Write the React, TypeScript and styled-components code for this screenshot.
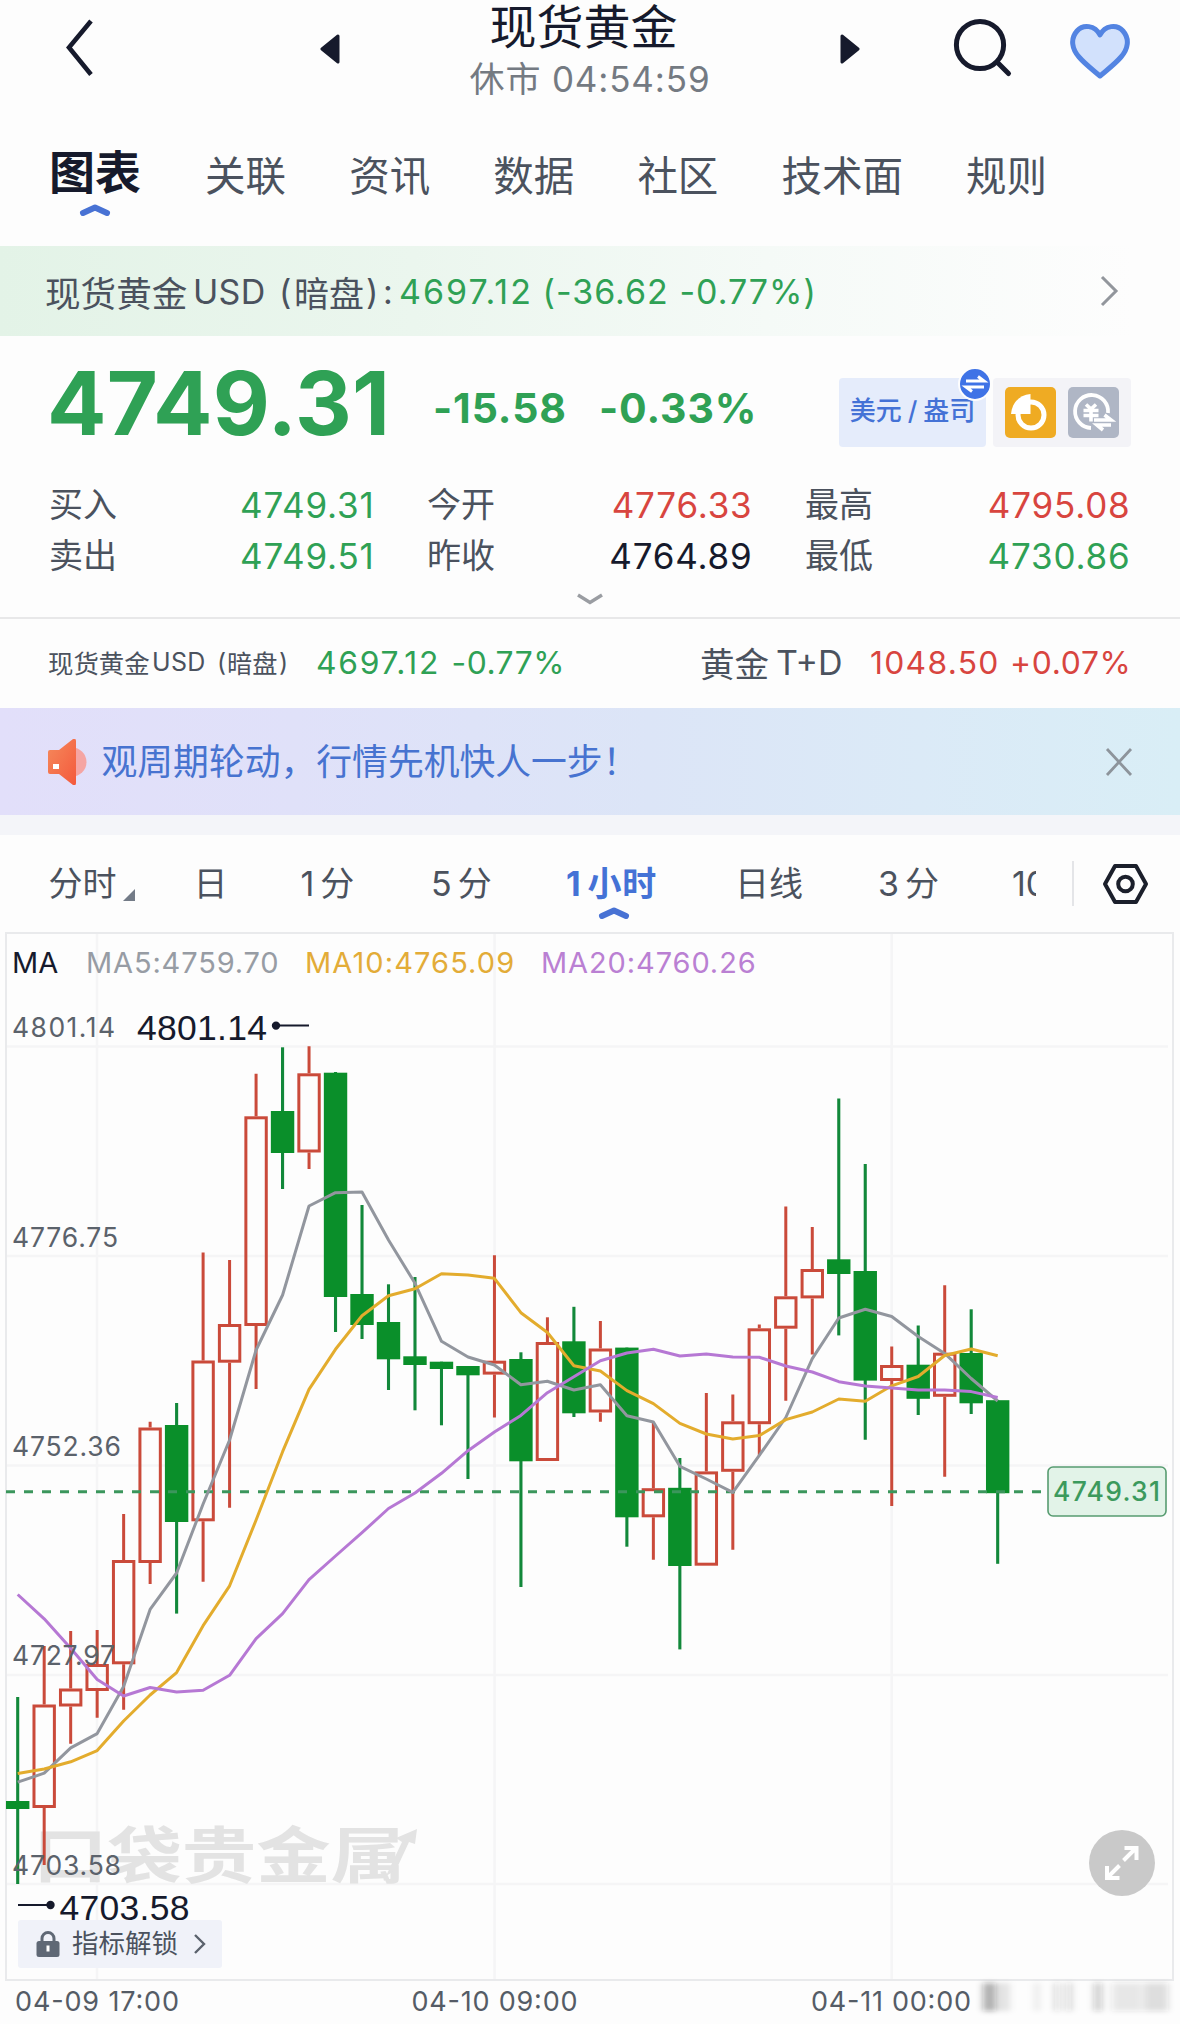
import React from "react";
import styled, { createGlobalStyle } from "styled-components";

const GREEN = "#2fa155";
const RED = "#d8453f";
const INK = "#161a2c";
const SLATE = "#4b525e";
const BLUE = "#4472d6";

const GlobalStyle = createGlobalStyle`
  body {
    margin: 0;
    background: #fdfdfd;
  }
`;

const Page = styled.main`
  width: 1180px;
  height: 2024px;
  overflow: hidden;
  display: flex;
  flex-direction: column;
  background: #fdfdfd;
  color: ${SLATE};
  font-family: Inter, "Noto Sans CJK SC", sans-serif;
  font-size: 34px;
  white-space: pre;
`;

const Header = styled.header`
  height: 118px;
  flex: none;
  display: grid;
  grid-template-columns: 310px 40px 480px 40px 144px 117px;
`;

const IconCell = styled.div<{ $align?: string; $pad?: number; $drop?: number }>`
  height: 95px;
  display: flex;
  align-items: center;
  justify-content: ${(p) => p.$align ?? "center"};
  padding-left: ${(p) => p.$pad ?? 0}px;
  padding-top: ${(p) => p.$drop ?? 0}px;
`;

const TitleBlock = styled.div`
  display: flex;
  flex-direction: column;
  align-items: center;
`;

const Title = styled.h1`
  margin: 0;
  padding-right: 13px;
  font-size: 47px;
  line-height: 54px;
  font-weight: 400;
  color: ${INK};
`;

const Subtitle = styled.div`
  font-size: 35px;
  line-height: 51px;
  letter-spacing: 0.85px;
  color: #747a82;
`;

const Tabs = styled.nav`
  height: 128px;
  flex: none;
  display: flex;
  gap: 63.1px;
  padding-left: 49px;
  box-sizing: border-box;
`;

const Tab = styled.div<{ $active?: boolean }>`
  display: flex;
  flex-direction: column;
  align-items: center;
  gap: 3px;
  padding-top: ${(p) => (p.$active ? 26 : 33)}px;
  margin-right: ${(p) => (p.$active ? 1 : 0)}px;
  font-size: ${(p) => (p.$active ? 46 : 40.5)}px;
  line-height: ${(p) => (p.$active ? 56 : 52)}px;
  font-weight: ${(p) => (p.$active ? 700 : 400)};
  color: ${(p) => (p.$active ? INK : SLATE)};
`;

const DarkBar = styled.section`
  height: 90px;
  flex: none;
  display: flex;
  align-items: center;
  padding: 0 61px 0 45px;
  box-sizing: border-box;
  background: linear-gradient(90deg, #e3f3e7 0%, #ebf6ee 35%, #f5faf7 65%, #fdfdfd 96%);
`;

const Cell = styled.span<{ $w: number; $ls?: number; $size?: number; $color?: string }>`
  width: ${(p) => p.$w}px;
  flex: none;
  letter-spacing: ${(p) => p.$ls ?? 0}px;
  font-size: ${(p) => p.$size ?? 34}px;
  color: ${(p) => p.$color ?? "inherit"};
`;

const Push = styled.span`
  margin-left: auto;
  display: flex;
`;

const PriceRow = styled.section`
  height: 143px;
  flex: none;
  display: flex;
  align-items: center;
  padding: 4px 0 0 47px;
  box-sizing: border-box;
  color: ${GREEN};
  font-weight: 700;
`;

const Price = styled.span`
  width: 386px;
  font-size: 88px;
  line-height: 100px;
  letter-spacing: 0.2px;
  padding-bottom: 14px;
`;

const Change = styled.span<{ $w: number }>`
  width: ${(p) => p.$w}px;
  font-size: 41px;
  line-height: 50px;
  letter-spacing: 0.9px;
  padding-bottom: 3px;
`;

const UnitChip = styled.div`
  position: relative;
  width: 147px;
  height: 69px;
  margin-left: auto;
  border-radius: 4px;
  background: #e5ecfb;
  color: ${BLUE};
  font-size: 26px;
  line-height: 66px;
  font-weight: 500;
  display: flex;
  justify-content: center;
  gap: 6px;
`;

const SwapBadge = styled.span`
  position: absolute;
  right: -6px;
  top: -11px;
  display: flex;
`;

const Toggle = styled.div`
  width: 138px;
  height: 69px;
  margin: 0 49px 0 7px;
  border-radius: 4px;
  background: #f3f3f7;
  display: flex;
  align-items: center;
  justify-content: center;
  gap: 12px;
`;

const PriceTools = styled.div`
  display: flex;
  margin-left: auto;
  padding-top: 6px;
`;

const Quotes = styled.section`
  height: 102px;
  flex: none;
  display: grid;
  grid-template-columns: 325px 325px 325px;
  grid-auto-rows: 51px;
  column-gap: 53px;
  padding: 0 49px;
`;

const Quote = styled.div<{ $color: string }>`
  display: flex;
  align-items: center;
  justify-content: space-between;
  font-size: 34px;
  line-height: 50px;

  b {
    font-weight: 400;
    font-size: 35px;
    letter-spacing: 0.8px;
    margin-right: -0.5px;
    color: ${(p) => p.$color};
  }
`;

const Expand = styled.div`
  height: 36px;
  flex: none;
  display: flex;
  align-items: center;
  justify-content: center;
  border-bottom: 2px solid #e8e8e9;
`;

const Related = styled.section`
  height: 89px;
  flex: none;
  display: flex;
  align-items: center;
  padding: 0 0 3px 48px;
  box-sizing: border-box;
`;

const Promo = styled.section`
  height: 107px;
  flex: none;
  display: flex;
  align-items: center;
  padding: 0 47px;
  box-sizing: border-box;
  background: linear-gradient(90deg, #e2dffa 0%, #e0e1f9 25%, #dce5f7 55%, #dbeaf7 78%, #d9eef6 100%);
`;

const PromoText = styled.span`
  padding-left: 12.5px;
  flex: 1;
  font-size: 35.8px;
  line-height: 52px;
  color: #4773d0;
`;

const Spacer = styled.div`
  height: 20px;
  flex: none;
  background: #f4f5f9;
`;

const Periods = styled.nav`
  height: 97px;
  flex: none;
  display: flex;
  align-items: center;
  padding-left: 48.5px;
  box-sizing: border-box;
`;

const Period = styled.div<{ $w: number; $active?: boolean; $clip?: boolean }>`
  width: ${(p) => p.$w}px;
  flex: none;
  display: flex;
  align-items: center;
  overflow: ${(p) => (p.$clip ? "hidden" : "visible")};
  gap: 6px;
  line-height: 52px;
  letter-spacing: ${(p) => (p.$active ? 0.8 : 0)}px;
  color: ${(p) => (p.$active ? BLUE : SLATE)};
  font-weight: ${(p) => (p.$active ? 700 : 400)};
  position: relative;

  svg {
    flex: none;
  }
`;

const Corner = styled.i`
  width: 0;
  height: 0;
  margin-top: 22px;
  border-left: 12px solid transparent;
  border-bottom: 12px solid #737b87;
`;

const ActiveMark = styled.span`
  position: absolute;
  left: 32px;
  top: 48px;
  display: flex;
`;

const Divider = styled.i`
  width: 2px;
  height: 45px;
  margin: 0 28px 0 36px;
  background: #e4e5e8;
`;

const ChartPanel = styled.section`
  position: relative;
  height: 1092px;
  flex: none;
`;

const Legend = styled.div`
  position: absolute;
  left: 12px;
  top: 12px;
  display: flex;
  line-height: 38px;
`;

const Unlock = styled.button`
  position: absolute;
  left: 18px;
  top: 988px;
  width: 204px;
  height: 48px;
  padding: 0 16px 0 18px;
  border: 0;
  border-radius: 3px;
  background: #f0f2f9;
  display: flex;
  align-items: center;
  font: 400 26.5px/46px Inter, "Noto Sans CJK SC", sans-serif;
  color: ${SLATE};

  span {
    flex: 1;
    text-align: left;
    padding: 0 0 2px 12px;
  }
`;

const Fullscreen = styled.button`
  position: absolute;
  left: 1089px;
  top: 898px;
  width: 66px;
  height: 66px;
  padding: 0;
  border: 0;
  border-radius: 50%;
  background: #c9c9c9;
  display: flex;
  align-items: center;
  justify-content: center;
`;

function Caret() {
  return (
    <svg width="32" height="14" viewBox="0 0 32 14">
      <path d="M4 10 L16 4.5 L28 10" fill="none" stroke="#4872d4" strokeWidth="6" strokeLinecap="round" strokeLinejoin="round" />
    </svg>
  );
}

type Candle = [number, number, number, number, 0 | 1];

// high, body top, body bottom, low, rising
const candles: Candle[] = [
  [1697, 1801, 1809, 1884, 0], [1646, 1704.5, 1808, 1865, 1], [1631, 1688.5, 1706.5, 1743.7, 1],
  [1630, 1664, 1691, 1717.7, 1], [1514, 1560, 1664.3, 1709.7, 1], [1421.7, 1427.5, 1563, 1584, 1],
  [1403, 1425, 1522, 1613.6, 0], [1252.5, 1360.5, 1521.3, 1581.7, 1], [1260, 1324, 1362.7, 1507.8, 1],
  [1073.7, 1116.3, 1326, 1389, 1], [1047.3, 1111, 1153, 1189, 0], [1046.3, 1073.3, 1152.5, 1169, 1],
  [1072, 1072.7, 1297, 1332, 0], [1205, 1294, 1325, 1339, 0], [1284.3, 1322, 1359.3, 1390, 0],
  [1277, 1356.3, 1365, 1410.3, 0], [1361.7, 1361.7, 1369, 1425.3, 0], [1366, 1366, 1375.3, 1479, 0],
  [1255.3, 1360.7, 1374.6, 1417.5, 1], [1352.3, 1359, 1461.3, 1587, 0], [1317.3, 1342, 1461, 1461, 1],
  [1306.8, 1341.3, 1413.3, 1417, 0], [1321, 1348.5, 1412.5, 1421.7, 1], [1347.6, 1347.6, 1517.3, 1546.7, 0],
  [1422, 1488.2, 1517.3, 1559.8, 1], [1458, 1487.8, 1566, 1649.4, 0], [1393, 1471.4, 1565.7, 1565.7, 1],
  [1394.4, 1421.3, 1471.8, 1549.7, 1], [1324.5, 1328.3, 1424.2, 1455.4, 1], [1206.6, 1296.3, 1328.7, 1400.7, 1],
  [1226.9, 1269, 1298.4, 1354.4, 1], [1098.5, 1259.3, 1274, 1335.4, 0], [1164, 1271, 1380.6, 1439.8, 0],
  [1346.5, 1365, 1381, 1506, 1], [1325.5, 1364.7, 1398.8, 1415, 0], [1285.2, 1352.7, 1396.8, 1476.7, 1],
  [1309.3, 1353, 1403.3, 1414, 0], [1400.2, 1400.2, 1493.2, 1563.8, 0],
];

const ma5 = [1782.2, 1773.2, 1747.9, 1733.6, 1686.5, 1609.4, 1573, 1504, 1440, 1350, 1295, 1206, 1192.7, 1192, 1240, 1283.3, 1341.3, 1357, 1365, 1384.7, 1381.3, 1390, 1384.7, 1415.8, 1422, 1466.3, 1479, 1492.4, 1455.4, 1417.5, 1358.6, 1318, 1309.3, 1316.5, 1336.5, 1353.4, 1378.5, 1401];
const ma10 = [1773.5, 1769, 1761.8, 1750.6, 1721, 1695, 1672.6, 1625.7, 1585.8, 1520, 1451.7, 1389.3, 1349.3, 1315.7, 1295.7, 1288.7, 1273.7, 1275, 1278.3, 1312.7, 1332.5, 1365.7, 1371, 1390.6, 1403.6, 1423.4, 1434, 1439, 1435.6, 1419.6, 1412, 1399, 1401.3, 1385.8, 1376.5, 1355.5, 1349, 1355.8];
const ma20 = [1594.5, 1618.8, 1648.3, 1679.5, 1696, 1687.5, 1692, 1690.3, 1675.3, 1638.6, 1613.6, 1579.6, 1556, 1532.7, 1508.5, 1493, 1473.3, 1450.7, 1432, 1415.4, 1392.7, 1376.7, 1360.7, 1353, 1349.3, 1356, 1354, 1357, 1357.3, 1366, 1372, 1381.7, 1386, 1388, 1390, 1390, 1391.6, 1397.5];

const candleX = (i: number) => 17.7 + i * 26.486;
const toPoints = (ys: number[]) => ys.map((y, i) => `${candleX(i).toFixed(1)},${y}`).join(" ");

const priceAxis: [string, number, number][] = [
  ["4801.14", 1037.3, 103], ["4776.75", 1246.6, 106], ["4752.36", 1456, 109], ["4727.97", 1665.4, 103], ["4703.58", 1875, 109],
];
const timeAxis: [string, number, number][] = [
  ["04-09 17:00", 15, 164], ["04-10 09:00", 411.5, 166], ["04-11 00:00", 811, 160],
];
const smudges: [number, number, number][] = [
  [983, 13, 0.34], [998, 12, 0.1], [1034, 6, 0.07], [1054, 6, 0.15], [1066, 6, 0.17], [1094, 8, 0.22], [1112, 30, 0.11], [1144, 24, 0.15],
];

function Chart() {
  return (
    <svg width="1180" height="1092" viewBox="0 932 1180 1092" fontFamily="Inter, sans-serif">
      <defs>
        <filter id="soft" x="-20%" y="-50%" width="140%" height="200%">
          <feGaussianBlur stdDeviation="3.5 2.5" />
        </filter>
      </defs>
      <g stroke="#f5f5f6" strokeWidth="2.5">
        {[97, 494.6, 891.7].map((x) => <line key={x} x1={x} x2={x} y1="933" y2="1980" />)}
        {[1046.4, 1256, 1465.5, 1675, 1884].map((y) => <line key={y} x1="7" x2="1168" y1={y} y2={y} />)}
      </g>
      <path d="M6 933 H1173 V1980 H6 Z" fill="none" stroke="#e9eaec" strokeWidth="2" />

      <g fill="#e3e3e3">
        <text x="33" y="1878" fontFamily="'Noto Sans CJK SC'" fontWeight="700" fontSize="61" textLength="372" lengthAdjust="spacingAndGlyphs">口袋贵金属</text>
        <path d="M386 1876 L402 1842 L396 1838 L417 1829 L415 1844 L409 1842 L396 1870 Z" />
      </g>

      {candles.map(([high, top, bottom, low, up], i) => {
        const x = candleX(i);
        return up ? (
          <g key={i} stroke="#ca4a3a" strokeWidth="3" fill="none">
            <path d={`M${x} ${high} V${top} M${x} ${bottom} V${low}`} />
            <rect x={x - 10.2} y={top + 1.5} width="20.4" height={bottom - top - 3} />
          </g>
        ) : (
          <g key={i}>
            <path d={`M${x} ${high} V${low}`} stroke="#12883a" strokeWidth="3.1" />
            <rect x={x - 11.7} y={top} width="23.4" height={bottom - top} fill="#0a8f2a" />
          </g>
        );
      })}

      <path d="M6 1491.7 H1041" stroke="#3b965c" strokeWidth="3" strokeDasharray="9 9" />

      <g fill="none" strokeWidth="3" strokeLinejoin="round">
        <polyline points={toPoints(ma5)} stroke="#92969e" />
        <polyline points={toPoints(ma10)} stroke="#e3ac2d" />
        <polyline points={toPoints(ma20)} stroke="#b678d4" />
      </g>

      <g fontSize="26.5" fill="#5b626b">
        {priceAxis.map(([t, y, w]) => <text key={t} x="12" y={y} textLength={w}>{t}</text>)}
      </g>
      <g fontSize="27" fill="#555c66">
        {timeAxis.map(([t, x, w]) => <text key={t} x={x} y="2011" textLength={w}>{t}</text>)}
      </g>

      <g fontFamily="'Liberation Sans', Arial, sans-serif" fontSize="35.5" fill={INK}>
        <text x="137" y="1039.8" textLength="130">4801.14</text>
        <text x="59.5" y="1920" textLength="130">4703.58</text>
      </g>
      <g stroke={INK} strokeWidth="2" fill={INK}>
        <path d="M276 1025.6 H309 M18 1905 H50" />
        <circle cx="276" cy="1025.6" r="3.2" />
        <circle cx="50.5" cy="1905" r="3.2" />
      </g>

      <rect x="1048" y="1467" width="118" height="49" rx="5" fill="#e2f3e8" stroke="#579c70" strokeWidth="1.6" />
      <text x="1053" y="1501.3" fontSize="26.5" fontWeight="500" fill="#3c9a5d" textLength="107">4749.31</text>

      <g fill="#222" filter="url(#soft)">
        {smudges.map(([x, w, o]) => <rect key={x} x={x} y="1983" width={w} height="28" opacity={o} />)}
      </g>
    </svg>
  );
}

const quotes: [string, string, string][] = [
  ["买入", "4749.31", GREEN], ["今开", "4776.33", RED], ["最高", "4795.08", RED],
  ["卖出", "4749.51", GREEN], ["昨收", "4764.89", INK], ["最低", "4730.86", GREEN],
];

export default function App() {
  return (
    <Page>
      <GlobalStyle />
      <Header>
        <IconCell $align="flex-start" $pad={62}>
          <svg width="34" height="64" viewBox="0 0 34 64" fill="none" stroke={INK} strokeWidth="4.6">
            <path d="M29 5 L7 31.5 L29 58.5" />
          </svg>
        </IconCell>
        <IconCell $drop={1}>
          <svg width="20" height="32" viewBox="0 0 20 32"><path d="M18 3 L2 16 L18 29 Z" fill={INK} stroke={INK} strokeWidth="3" strokeLinejoin="round" /></svg>
        </IconCell>
        <TitleBlock>
          <Title>现货黄金</Title>
          <Subtitle>休市 04:54:59</Subtitle>
        </TitleBlock>
        <IconCell $drop={1}>
          <svg width="20" height="32" viewBox="0 0 20 32"><path d="M2 3 L18 16 L2 29 Z" fill={INK} stroke={INK} strokeWidth="3" strokeLinejoin="round" /></svg>
        </IconCell>
        <IconCell $align="flex-end">
          <svg width="62" height="64" viewBox="0 0 62 64" fill="none" stroke={INK} strokeWidth="5" strokeLinecap="round">
            <circle cx="28" cy="29" r="23.6" />
            <path d="M45.5 46.5 L56.5 57.5" />
          </svg>
        </IconCell>
        <IconCell $align="flex-end" $drop={4}>
          <svg width="62" height="58" viewBox="0 0 62 58">
            <path d="M31 12 C26 2 14 1 8 8 C1 16 3 26 10 34 C16 41 24 47 31 53 C38 47 46 41 52 34 C59 26 61 16 54 8 C48 1 36 2 31 12 Z" fill="#d2e1fc" stroke="#5384e2" strokeWidth="5" strokeLinejoin="round" />
          </svg>
        </IconCell>
      </Header>

      <Tabs>
        <Tab $active>图表<Caret /></Tab>
        {["关联", "资讯", "数据", "社区", "技术面", "规则"].map((t) => <Tab key={t}>{t}</Tab>)}
      </Tabs>

      <DarkBar>
        <Cell $w={148} $size={35.6}>现货黄金</Cell>
        <Cell $w={86} $ls={0.3}>USD</Cell>
        <Cell $w={15}>(</Cell>
        <Cell $w={72} $size={35}>暗盘</Cell>
        <Cell $w={17}>)</Cell>
        <Cell $w={16}>:</Cell>
        <Cell $w={143.5} $ls={2} $color={GREEN}>4697.12</Cell>
        <Cell $w={284} $ls={1} $color={GREEN}>(-36.62 -0.77%)</Cell>
        <Push>
          <svg width="20" height="34" viewBox="0 0 20 34"><path d="M3 3 L17 17 L3 31" fill="none" stroke="#92969c" strokeWidth="3" /></svg>
        </Push>
      </DarkBar>

      <PriceRow>
        <Price>4749.31</Price>
        <Change $w={166}>-15.58</Change>
        <Change $w={160}>-0.33%</Change>
        <PriceTools>
          <UnitChip>
            <span>美元</span><span>/</span><span>盎司</span>
            <SwapBadge>
              <svg width="34" height="34" viewBox="0 0 34 34">
                <circle cx="17" cy="17" r="16" fill="#3f73e6" stroke="#fdfdfd" strokeWidth="2" />
                <path d="M8 14 H26 L20 9.5 M26 20 H8 L14 24.500" fill="none" stroke="#fff" strokeWidth="3" />
              </svg>
            </SwapBadge>
          </UnitChip>
          <Toggle>
            <svg width="51" height="51" viewBox="0 0 51 51">
              <rect width="51" height="51" rx="5" fill="#efab23" />
              <circle cx="26" cy="28" r="13" fill="none" stroke="#fff" strokeWidth="5" />
              <path d="M25.500 27 H6 C7 16 14 8 25.500 7 Z" fill="#fff" />
            </svg>
            <svg width="51" height="51" viewBox="0 0 51 51" fill="none" stroke="#fff">
              <rect width="51" height="51" rx="5" fill="#afb6c5" stroke="none" />
              <path d="M23 41 A16.500 16.500 0 1 1 40 26" strokeWidth="3.8" />
              <path d="M18 17.500 L23 22 L28 17.500 M15.500 23.500 H30.500 M15.500 28.500 H30.500 M23 22 V34.500" strokeWidth="3.600" />
              <path d="M26 33 H43 L36.500 28 M43 38 H29 L35 43" strokeWidth="3.600" />
            </svg>
          </Toggle>
        </PriceTools>
      </PriceRow>

      <Quotes>
        {quotes.map(([label, value, color]) => (
          <Quote key={label} $color={color}><span>{label}</span><b>{value}</b></Quote>
        ))}
      </Quotes>

      <Expand>
        <svg width="30" height="14" viewBox="0 0 30 14"><path d="M3 3 L15 10.500 L27 3" fill="none" stroke="#9a9da2" strokeWidth="3.4" /></svg>
      </Expand>

      <Related>
        <Cell $w={104} $size={25.4}>现货黄金</Cell>
        <Cell $w={65} $size={25} $ls={0.3}>USD</Cell>
        <Cell $w={10} $size={25}>(</Cell>
        <Cell $w={52} $size={25.2}>暗盘</Cell>
        <Cell $w={37} $size={25}>)</Cell>
        <Cell $w={135.500} $size={31.8} $ls={1.7} $color={GREEN}>4697.12</Cell>
        <Cell $w={248.500} $size={31.8} $ls={0.5} $color={GREEN}>-0.77%</Cell>
        <Cell $w={76} $size={34.500}>黄金</Cell>
        <Cell $w={94} $size={34}>T+D</Cell>
        <Cell $w={140} $size={31.8} $ls={1.300} $color={RED}>1048.50</Cell>
        <Cell $w={121} $size={31.8} $ls={0.700} $color={RED}>+0.07%</Cell>
      </Related>

      <Promo>
        <svg width="42" height="46" viewBox="0 0 42 46">
          <defs>
            <linearGradient id="horn" x1="0" y1="0" x2="1" y2="1">
              <stop offset="0" stopColor="#f58a5c" />
              <stop offset="1" stopColor="#f4593c" />
            </linearGradient>
          </defs>
          <circle cx="25" cy="23" r="14.500" fill="#f5a5a3" />
          <path d="M1 13 Q1 11 3 11 H12 L26 0 Q29 -1 29 2 V44 Q29 47 26 46 L12 35 H3 Q1 35 1 33 Z" fill="url(#horn)" />
          <rect x="6" y="25" width="6" height="5" fill="#fff" />
        </svg>
        <PromoText>观周期轮动，行情先机快人一步！</PromoText>
        <svg width="28" height="30" viewBox="0 0 28 30"><path d="M2 2 L26 28 M26 2 L2 28" stroke="#8d949b" strokeWidth="2.800" /></svg>
      </Promo>
      <Spacer />

      <Periods>
        <Period $w={145}>分时<Corner /></Period>
        <Period $w={107}>日</Period>
        <Period $w={130.500}>1<span>分</span></Period>
        <Period $w={135}>5<span>分</span></Period>
        <Period $w={169} $active>1<span>小时</span><ActiveMark><Caret /></ActiveMark></Period>
        <Period $w={143}>日线</Period>
        <Period $w={134}>3<span>分</span></Period>
        <Period $w={24} $clip>10分</Period>
        <Divider />
        <svg width="48" height="44" viewBox="0 0 48 44" fill="none" stroke="#1b1f2b" strokeWidth="4">
          <path d="M13 4 H34 L44 22 L34 40 H13 L3 22 Z" strokeLinejoin="round" />
          <circle cx="23.500" cy="22" r="7.300" />
        </svg>
      </Periods>

      <ChartPanel>
        <Chart />
        <Legend>
          <Cell $w={74} $size={29} $color={INK}>MA</Cell>
          <Cell $w={219} $size={29} $ls={0.85} $color="#979ca4">MA5:4759.70</Cell>
          <Cell $w={236} $size={29} $ls={1.1} $color="#e3ac38">MA10:4765.09</Cell>
          <Cell $w={230} $size={29} $ls={0.9} $color="#ba80d3">MA20:4760.26</Cell>
        </Legend>
        <Unlock>
          <svg width="24" height="28" viewBox="0 0 24 28">
            <path d="M6 13 V8.500 A6 6 0 0 1 18 8.500 V13" fill="none" stroke="#5f6875" strokeWidth="3" />
            <rect x="0.500" y="11" width="23" height="16" rx="2.500" fill="#5f6875" />
            <rect x="10.500" y="15.500" width="3" height="6" fill="#fff" />
          </svg>
          <span>指标解锁</span>
          <svg width="13" height="22" viewBox="0 0 13 22"><path d="M2 2 L11 11 L2 20" fill="none" stroke="#5b626d" strokeWidth="2.400" /></svg>
        </Unlock>
        <Fullscreen>
          <svg width="40" height="40" viewBox="0 0 40 40" fill="none" stroke="#fff" strokeWidth="4">
            <path d="M21.500 17.500 L34 5 M22.500 5 H34.500 V17 M17.500 22.500 L5 35 M5 23 V35 H17.500" />
          </svg>
        </Fullscreen>
      </ChartPanel>
    </Page>
  );
}
